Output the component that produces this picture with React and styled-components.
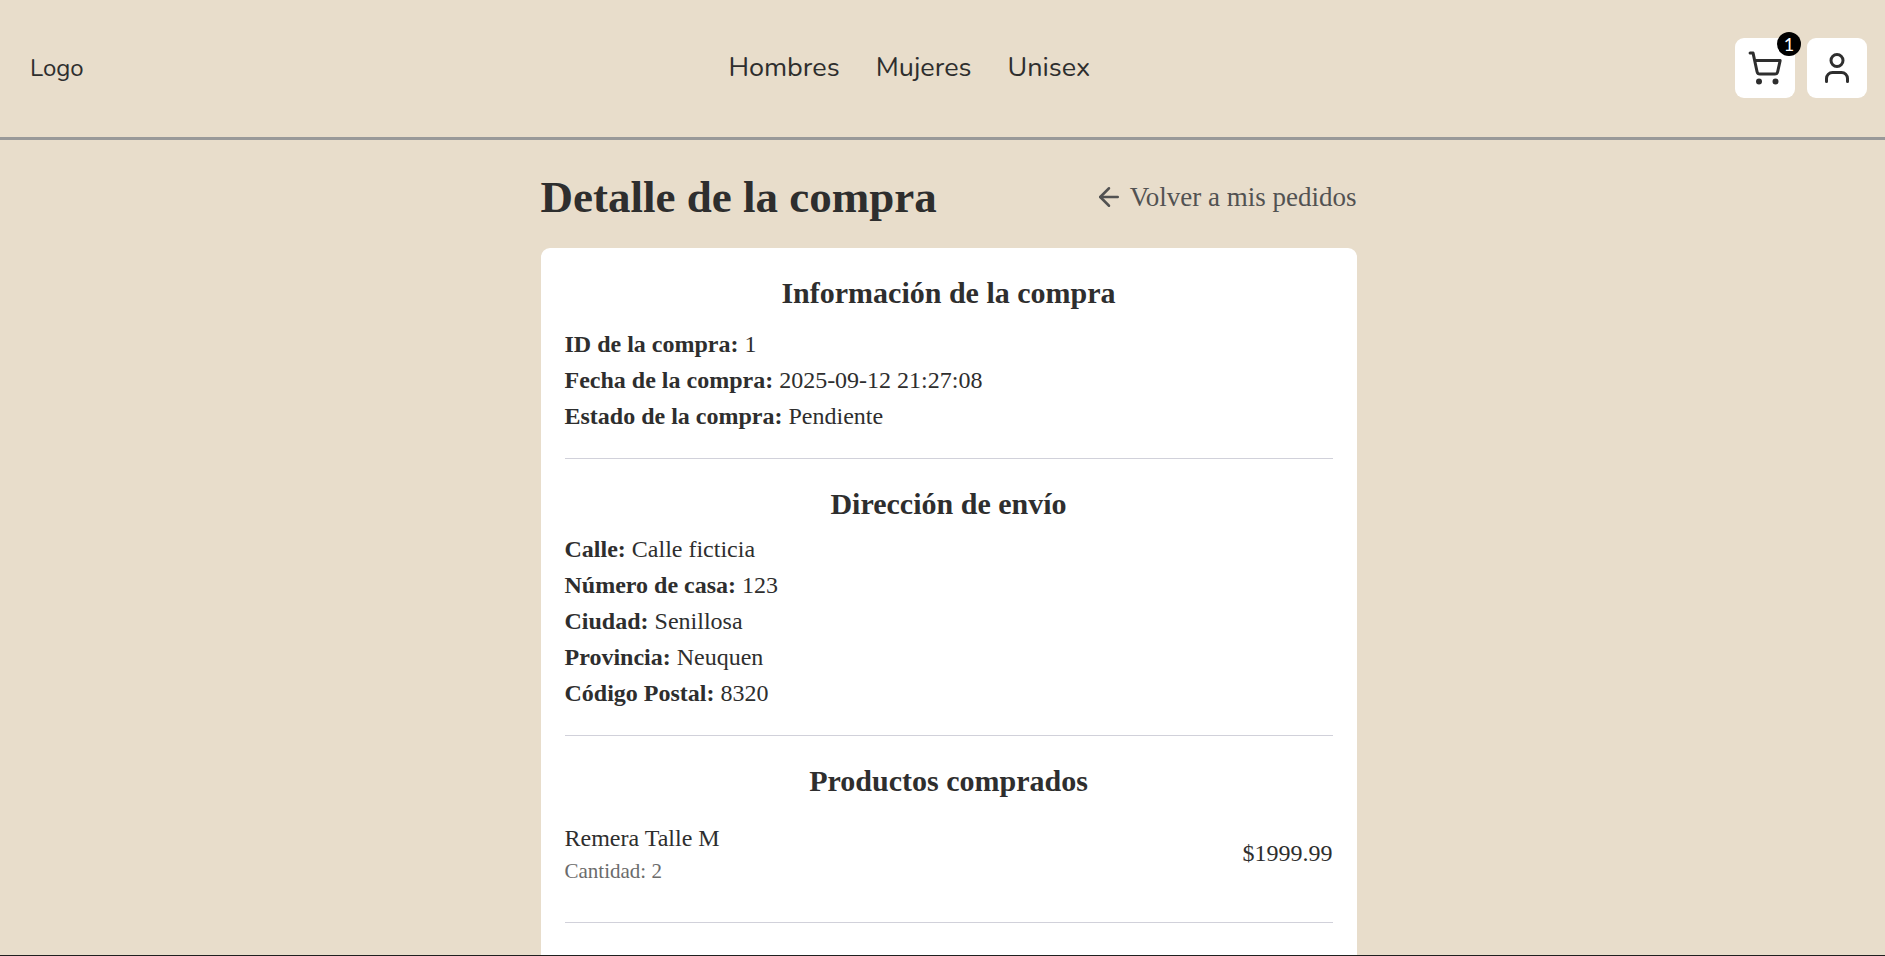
import React from "react";
import styled, { createGlobalStyle } from "styled-components";
import { ArrowLeft, ShoppingCart, User } from "lucide-react";

const GlobalStyle = createGlobalStyle`
  *, *::before, *::after { box-sizing: border-box; }
  body {
    margin: 0;
    background: #e8ddcb;
    color: #2e2e2e;
    font-family: "Liberation Serif", "Times New Roman", serif;
    font-size: 24px;
    line-height: 36px;
  }
  h1, h2, p, dl, dd, ul { margin: 0; padding: 0; }
  a { color: inherit; text-decoration: none; }
`;

const Page = styled.div`
  display: flex;
  flex-direction: column;
  height: 100vh;
  overflow: hidden;
  border-bottom: 1px solid #1f1f1f;
`;

const Header = styled.header`
  display: flex;
  flex-shrink: 0;
  align-items: center;
  justify-content: space-between;
  padding: 38px 18px 39px 30px;
  border-bottom: 3px solid #999999;
  font-family: Nunito, Lato, sans-serif;
`;

const Logo = styled.a`
  font-size: 24px;
`;

const Nav = styled.nav`
  display: flex;
  gap: 36px;
  font-size: 27px;
`;

const Actions = styled.div`
  display: flex;
  gap: 12px;
`;

const IconButton = styled.button`
  position: relative;
  display: flex;
  align-items: center;
  justify-content: center;
  width: 60px;
  height: 60px;
  padding: 0;
  border: 0;
  border-radius: 9px;
  background: #ffffff;
  color: #2e2e2e;
  font-family: inherit;
  cursor: pointer;
`;

const Badge = styled.span`
  position: absolute;
  top: -6px;
  right: -6px;
  width: 24px;
  height: 24px;
  border-radius: 50%;
  background: #000000;
  color: #ffffff;
  font-family: Lato, sans-serif;
  font-size: 18px;
  line-height: 24px;
  text-align: center;
`;

const Main = styled.main`
  display: flex;
  flex: 1;
  flex-direction: column;
  align-items: center;
  padding: 30px 0 0 12px;
`;

const Content = styled.div`
  display: flex;
  flex: 1;
  flex-direction: column;
  gap: 24px;
  width: 100%;
  max-width: 816px;
`;

const TitleRow = styled.div`
  display: flex;
  align-items: center;
  justify-content: space-between;
`;

const Title = styled.h1`
  font-size: 45px;
  line-height: 54px;
`;

const BackLink = styled.a`
  display: flex;
  align-items: center;
  gap: 6px;
  color: #525252;
  font-size: 27px;
`;

const Card = styled.div`
  flex: 1;
  padding: 0 24px;
  border-radius: 9px 9px 0 0;
  background: #ffffff;
`;

const Section = styled.section`
  padding: 24px 0;
  border-bottom: 1px solid #d1d1da;
`;

const SectionTitle = styled.h2`
  margin-bottom: ${({ $gap }) => $gap}px;
  font-size: 30px;
  line-height: 42px;
  text-align: center;
`;

const Field = styled.div`
  display: flex;
  gap: 6px;
`;

const FieldName = styled.dt`
  font-weight: 700;
`;

const Products = styled.ul`
  list-style: none;
`;

const Product = styled.li`
  display: flex;
  align-items: center;
  justify-content: space-between;
  padding: 12px 0;
`;

const Quantity = styled.p`
  color: #6b6b6b;
  font-size: 21px;
  line-height: 30px;
`;

const purchase = [
  ["ID de la compra:", "1"],
  ["Fecha de la compra:", "2025-09-12 21:27:08"],
  ["Estado de la compra:", "Pendiente"],
];

const address = [
  ["Calle:", "Calle ficticia"],
  ["Número de casa:", "123"],
  ["Ciudad:", "Senillosa"],
  ["Provincia:", "Neuquen"],
  ["Código Postal:", "8320"],
];

const products = [{ name: "Remera Talle M", quantity: 2, price: "$1999.99" }];

function Fields({ items }) {
  return (
    <dl>
      {items.map(([name, value]) => (
        <Field key={name}>
          <FieldName>{name}</FieldName>
          <dd>{value}</dd>
        </Field>
      ))}
    </dl>
  );
}

export default function App() {
  return (
    <Page>
      <GlobalStyle />
      <Header>
        <Logo href="#">Logo</Logo>
        <Nav>
          <a href="#hombres">Hombres</a>
          <a href="#mujeres">Mujeres</a>
          <a href="#unisex">Unisex</a>
        </Nav>
        <Actions>
          <IconButton type="button" aria-label="Carrito">
            <ShoppingCart size={36} />
            <Badge>1</Badge>
          </IconButton>
          <IconButton type="button" aria-label="Mi cuenta">
            <User size={36} />
          </IconButton>
        </Actions>
      </Header>
      <Main>
        <Content>
          <TitleRow>
            <Title>Detalle de la compra</Title>
            <BackLink href="#pedidos">
              <ArrowLeft size={30} />
              Volver a mis pedidos
            </BackLink>
          </TitleRow>
          <Card>
            <Section>
              <SectionTitle $gap={12}>Información de la compra</SectionTitle>
              <Fields items={purchase} />
            </Section>
            <Section>
              <SectionTitle $gap={6}>Dirección de envío</SectionTitle>
              <Fields items={address} />
            </Section>
            <Section>
              <SectionTitle $gap={6}>Productos comprados</SectionTitle>
              <Products>
                {products.map((product) => (
                  <Product key={product.name}>
                    <div>
                      <p>{product.name}</p>
                      <Quantity>Cantidad: {product.quantity}</Quantity>
                    </div>
                    <span>{product.price}</span>
                  </Product>
                ))}
              </Products>
            </Section>
          </Card>
        </Content>
      </Main>
    </Page>
  );
}
